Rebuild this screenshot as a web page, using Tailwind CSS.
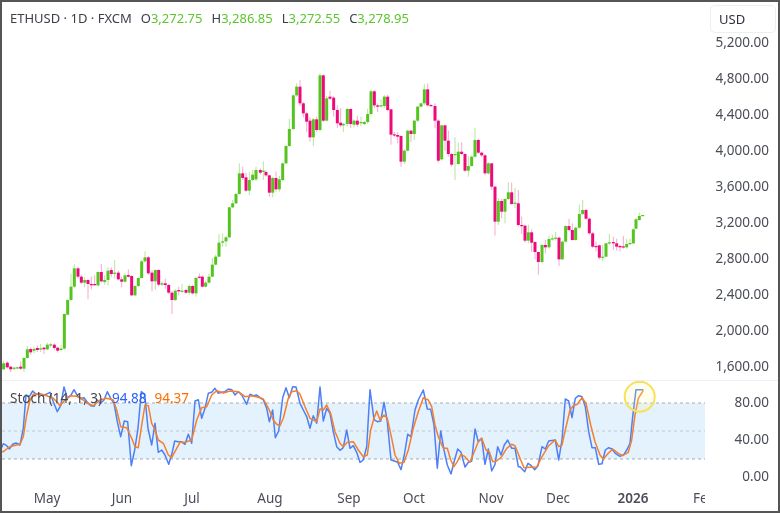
<!DOCTYPE html>
<html lang="en">
<head>
<meta charset="UTF-8">
<title>ETHUSD chart</title>
<script src="https://cdn.jsdelivr.net/npm/@tailwindcss/browser@4"></script>
</head>
<body class="bg-white">
<div class="relative w-[780px] h-[513px] overflow-hidden bg-white border-2 border-[#555555] blur-[0.35px] font-['Noto_Sans',sans-serif] text-[#3c3f4a] flex flex-col">

  <!-- price pane -->
  <div class="relative h-[378px] flex shrink-0">
    <div class="relative w-[703px]">
      <svg id="candles" width="703" height="378" class="block"></svg>
      <div class="absolute left-[8px] top-[7px] flex gap-[9px] text-[13px] leading-[18px]">
        <span>ETHUSD · 1D · FXCM</span>
        <div class="flex gap-[9px]">
          <span>O<span class="text-[#5cc62e]">3,272.75</span></span>
          <span>H<span class="text-[#5cc62e]">3,286.85</span></span>
          <span>L<span class="text-[#5cc62e]">3,272.55</span></span>
          <span>C<span class="text-[#5cc62e]">3,278.95</span></span>
        </div>
      </div>
    </div>
    <!-- price axis -->
    <div class="flex-1 relative pt-[22px] pr-[9px] text-right text-[13.5px] text-[#4a4d57]">
      <div class="h-[36px] leading-[36px]">5,200.00</div>
      <div class="h-[36px] leading-[36px]">4,800.00</div>
      <div class="h-[36px] leading-[36px]">4,400.00</div>
      <div class="h-[36px] leading-[36px]">4,000.00</div>
      <div class="h-[36px] leading-[36px]">3,600.00</div>
      <div class="h-[36px] leading-[36px]">3,200.00</div>
      <div class="h-[36px] leading-[36px]">2,800.00</div>
      <div class="h-[36px] leading-[36px]">2,400.00</div>
      <div class="h-[36px] leading-[36px]">2,000.00</div>
      <div class="h-[36px] leading-[36px]">1,600.00</div>
      <div class="absolute left-[5px] top-[3px] w-[66px] h-[28px] bg-white border border-[#eeeeee] rounded-[5px] shadow-[0_4px_0_#ffffff] text-left text-[13px] pl-[8px] leading-[26px] text-[#2f323c]">USD</div>
    </div>
  </div>

  <div class="h-px bg-[#eeeef6] shrink-0"></div>

  <!-- stochastic pane -->
  <div class="relative h-[100px] flex shrink-0 overflow-hidden">
    <div class="relative w-[703px]">
      <svg id="stoch" width="703" height="100" class="block"></svg>
      <div class="absolute left-[8px] top-[8px] flex text-[13.5px] leading-[18px]">
        <span class="text-[#44474f]">Stoch (14, 1, 3)</span>
        <span class="text-[#2962ff] ml-[10px]">94.88</span>
        <span class="text-[#ff6d00] ml-[8px]">94.37</span>
      </div>
    </div>
    <div class="flex-1 pt-[3px] pr-[9px] text-right text-[13.5px] text-[#4a4d57]">
      <div class="h-[37px] leading-[37px]">80.00</div>
      <div class="h-[37px] leading-[37px]">40.00</div>
      <div class="h-[37px] leading-[37px]">0.00</div>
    </div>
  </div>

  <!-- time axis -->
  <div class="relative flex-1 text-[13.5px] text-[#4a4d57] leading-[18px]">
    <div class="absolute inset-y-0 left-0 w-[703px] overflow-hidden">
      <span class="absolute top-[8px] left-[45px] -translate-x-1/2">May</span>
      <span class="absolute top-[8px] left-[120px] -translate-x-1/2">Jun</span>
      <span class="absolute top-[8px] left-[190px] -translate-x-1/2">Jul</span>
      <span class="absolute top-[8px] left-[268px] -translate-x-1/2">Aug</span>
      <span class="absolute top-[8px] left-[347px] -translate-x-1/2">Sep</span>
      <span class="absolute top-[8px] left-[412px] -translate-x-1/2">Oct</span>
      <span class="absolute top-[8px] left-[489px] -translate-x-1/2">Nov</span>
      <span class="absolute top-[8px] left-[556px] -translate-x-1/2">Dec</span>
      <span class="absolute top-[8px] left-[631px] -translate-x-1/2 font-semibold">2026</span>
      <span class="absolute top-[8px] left-[691px]">Feb</span>
    </div>
  </div>
</div>

<script>
  // pane origin inside the frame
  const OX = 2, OY = 2, STOCH_Y = 381;
  const UP = '#55c41f', DOWN = '#ec0a78', UP_WICK = '#b5e6a0', DOWN_WICK = '#f9a8cf';

  // [x, bodyTop, bodyBottom, color, wickTop, wickBottom], read off the chart in 3x coords
  const a = [
    [2,580,598,'u',575,610],[11,580,598,'u',572,600],[22,578,592,'d',574,596],[32,590,598,'d',588,606],[42,593,596,'u',590,600],[52,592,595,'u',590,598],[62,590,596,'d',574,600],[72,564,596,'u',560,606],
    [82,538,564,'u',528,566],[92,537,547,'d',532,554],[102,537,542,'u',530,550],[112,534,540,'d',526,546],[122,535,538,'u',522,546],[132,533,538,'d',530,552],[142,524,538,'u',518,540],[152,523,526,'u',518,532],
    [163,524,534,'d',520,540],[173,533,542,'d',530,548],[183,536,540,'u',524,544],[193,432,536,'u',430,538],[203,390,434,'u',388,436],[213,350,390,'u',312,394],[223,295,350,'u',283,354],[234,295,320,'d',290,326],
    [244,320,338,'d',314,342],[254,330,338,'u',322,352],[264,330,342,'d',326,388],[274,342,344,'d',320,358],[284,342,344,'d',316,348],[294,306,346,'u',304,350],[304,306,334,'d',282,338],[314,330,336,'u',316,344],
    [324,302,330,'u',292,346],[334,300,312,'d',292,320],[344,308,310,'u',270,326],[355,308,328,'d',302,332],[365,328,335,'d',320,352],[375,316,335,'u',310,338],[385,315,320,'d',298,324],[395,318,376,'d',316,378],
    [405,348,376,'u',346,378],[415,324,348,'u',322,352],[425,274,324,'u',270,326],[435,262,274,'u',244,278],[445,262,310,'d',258,314],[456,308,334,'d',300,364],[466,300,334,'u',298,360],[476,300,344,'d',298,350],
    [486,340,344,'u',334,348],[496,340,345,'d',326,356],[506,345,368,'d',342,372],[516,368,390,'d',362,432],[526,362,390,'u',358,394],[536,360,364,'d',350,376],[546,362,364,'u',342,368],[558,360,368,'d',356,372],
    [568,348,368,'u',344,374],[578,348,370,'d',344,374],[588,324,370,'u',320,380],[598,320,322,'d',310,326],[607,320,350,'d',316,352],[617,338,350,'u',332,352],[627,320,338,'u',310,340],[637,284,320,'u',264,322],
    [647,260,284,'u',254,286],[657,218,260,'u',192,262],[668,214,218,'u',190,230],[678,202,214,'u',198,230],[688,112,202,'u',110,204],[698,100,112,'u',90,114],[708,72,100,'u',68,102],[718,10,72,'u',-20,74],
    [728,10,24,'d',-10,30],[738,22,62,'d',8,66],[748,30,62,'u',6,76],[758,14,30,'u',0,34],[768,0,28,'u',-10,34]
  ].map(c => [c[0]/3, 170+c[1]/3, 170+c[2]/3, c[3], 170+c[4]/3, 170+c[5]/3]);

  const b = [
    [1,510,518,'d',505,524],[10,512,513,'u',484,540],[18,516,526,'d',510,530],[28,526,578,'d',524,590],[38,534,578,'u',530,592],[48,534,568,'d',514,575],[58,538,568,'u',528,575],[68,490,540,'u',488,544],[78,438,490,'u',436,492],
    [88,387,438,'u',356,440],[100,286,387,'u',284,390],[110,260,286,'u',250,290],[120,260,310,'d',240,318],[130,310,340,'d',305,352],[140,340,365,'d',336,395],[150,362,412,'d',352,425],[160,358,412,'u',354,438],
    [170,358,390,'d',350,396],[180,226,390,'u',220,394],[190,226,362,'d',224,366],[200,295,362,'u',288,364],[210,290,296,'d',272,300],[221,293,330,'d',288,350],[232,330,370,'d',316,384],[242,368,376,'d',324,382],
    [250,372,376,'u',368,396],[262,327,372,'u',324,380],[272,327,372,'d',324,384],[282,362,374,'u',358,382],[292,362,374,'d',348,380],[303,366,369,'u',350,378],[313,366,372,'u',362,376],[323,342,366,'u',326,372],
    [333,274,342,'u',268,346],[343,274,316,'d',270,324],[353,316,320,'d',310,336],[363,316,319,'u',298,322],[373,290,318,'u',286,324],[383,290,330,'d',284,334],[393,328,404,'d',326,434],[403,403,405,'d',396,410],
    [413,405,410,'d',396,430],[423,408,485,'d',406,500],[433,452,485,'u',448,492],[443,392,452,'u',390,454],[453,392,402,'d',390,426],[463,362,402,'u',360,420],[473,320,362,'u',318,366],[483,310,320,'u',308,322],
    [493,268,310,'u',252,316],[503,268,316,'d',250,320],[513,315,317,'d',312,320],[525,318,362,'d',310,384],[535,362,482,'d',358,488],[545,376,478,'u',374,482],[555,376,422,'d',374,452],[565,422,462,'d',392,470],
    [575,462,494,'d',458,500],[585,462,464,'u',412,540],[595,455,492,'u',428,494],[605,455,462,'d',426,466],[615,462,512,'d',460,516],[625,498,512,'u',468,530],[635,470,498,'u',466,500],[645,420,470,'u',384,472],
    [655,420,458,'d',416,462],[665,458,466,'d',454,472],[675,466,520,'d',462,526],[685,490,520,'u',486,524]
  ].map(c => [260+c[0]/3, c[1]/3, c[2]/3, c[3], c[4]/3, c[5]/3]);

  const d = [
    [65,-20,50,'d',-20,60],[75,50,155,'d',48,197],[85,93,155,'u',84,165],[95,93,125,'d',86,145],[105,87,125,'u',85,160],[115,67,87,'u',36,90],
    [125,67,102,'d',38,104],[135,98,101,'u',54,114],[145,100,165,'d',60,170],[155,165,167,'d',140,192],[165,167,212,'d',165,218],[175,187,212,'u',164,220],[185,187,218,'d',178,246],[195,216,246,'d',214,268],
    [205,246,276,'d',244,314],[216,225,276,'u',222,280],[226,225,232,'d',210,250],[237,207,232,'u',197,236],[247,205,207,'u',194,212],[257,203,206,'u',186,212],[267,203,268,'d',200,288],[277,215,268,'u',212,270],
    [287,168,215,'u',166,218],[297,168,180,'d',146,184],[307,180,210,'d',160,212],[317,173,210,'u',170,212],[328,132,173,'u',104,176],[338,120,132,'u',90,135],[348,120,146,'d',116,150],[358,146,190,'d',142,194],
    [368,190,230,'d',186,234],[378,228,231,'d',214,244],[388,226,263,'d',224,268],[398,260,263,'u',224,274],[408,220,260,'u',218,262],[418,217,220,'u',192,224],[430,216,220,'d',200,240],[440,220,230,'d',206,242],
    [450,228,232,'d',224,244],[460,229,232,'d',198,236],[470,222,232,'u',206,236],[480,219,222,'u',206,224],[490,178,220,'u',174,222],[498,148,176,'u',144,178],[508,138,150,'u',128,152],[518,135,137,'u',135,138]
  ].map(c => [470+c[0]/3, 170+c[1]/3, 170+c[2]/3, c[3], 170+c[4]/3, 170+c[5]/3]);

  let html = '';
  [...a, ...b, ...d].forEach(c => {
    const x = c[0] - OX, up = c[3] == 'u';
    html += `<rect x="${x - .5}" y="${c[4] - OY}" width="1" height="${c[5] - c[4]}" fill="${up ? UP_WICK : DOWN_WICK}"/>`;
    html += `<rect x="${x - 1.5}" y="${c[1] - OY}" width="3" height="${Math.max(c[2] - c[1], 1.2)}" fill="${up ? UP : DOWN}"/>`;
  });
  document.getElementById('candles').innerHTML = html;

  // stochastic lines, three 3x crops each starting at y=375
  const blue = [
    [0,[[0,230],[10,206],[20,212],[28,222],[38,208],[48,204],[60,210],[70,160],[78,60],[88,65],[98,48],[108,58],[118,56],[128,62],[138,58],[150,52],[160,80],[172,110],[182,92],[192,36],[202,70],[212,62],[222,44],[232,62],[242,70],[252,68],[262,82],[272,92],[282,94],[292,75],[302,85],[312,75],[322,50],[332,70],[342,85],[352,140],[362,185],[373,138],[383,140],[394,272],[404,225],[414,160],[424,50],[434,58],[444,160],[455,210],[465,145],[475,232],[485,225],[495,240],[506,268],[516,235],[524,198],[534,200],[544,200],[555,208],[565,178],[575,205],[585,78],[595,74],[605,130],[615,100],[625,55],[635,52],[645,40],[655,55],[665,52],[675,50],[685,42],[695,44],[705,60],[715,50],[725,60],[740,88],[750,58],[760,62],[770,60]]],
    [260,[[0,68],[10,75],[20,100],[28,140],[38,105],[46,188],[56,168],[68,68],[78,38],[88,68],[98,35],[108,36],[120,85],[130,105],[140,125],[150,160],[160,122],[170,145],[180,36],[190,138],[200,100],[210,115],[220,170],[230,215],[240,226],[250,218],[260,165],[270,220],[280,212],[290,232],[300,262],[310,255],[320,215],[330,44],[342,134],[352,140],[362,138],[372,82],[382,140],[393,255],[403,258],[413,262],[423,284],[433,240],[443,178],[453,185],[465,105],[475,75],[490,45],[502,102],[512,103],[522,150],[532,280],[542,168],[552,225],[562,270],[573,297],[583,258],[593,222],[603,232],[615,276],[625,262],[635,258],[645,162],[655,200],[665,190],[675,268],[685,222],[695,288],[705,268],[713,215],[723,240],[733,210],[743,195],[755,220],[765,220],[775,275]]],
    [520,[[0,275],[14,290],[24,265],[34,272],[44,284],[54,272],[66,215],[76,222],[86,198],[106,195],[116,255],[126,195],[136,72],[146,78],[156,128],[166,70],[176,62],[186,65],[196,95],[206,170],[216,218],[226,218],[236,268],[246,266],[256,225],[266,218],[276,222],[286,235],[300,244],[312,238],[322,222],[330,205],[338,125],[348,44],[358,44],[370,44]]]
  ];
  const orange = [
    [0,[[0,228],[10,230],[20,222],[30,215],[40,212],[60,208],[70,185],[80,120],[90,75],[100,58],[120,56],[140,62],[160,70],[170,80],[180,92],[190,80],[210,62],[230,64],[250,75],[262,85],[280,92],[300,75],[320,70],[340,75],[350,105],[362,155],[380,158],[395,190],[405,215],[415,218],[425,150],[435,90],[445,92],[455,145],[465,165],[475,195],[490,205],[505,240],[515,248],[530,220],[540,202],[555,202],[575,195],[590,135],[605,98],[620,95],[635,60],[650,47],[670,54],[690,48],[715,50],[735,65],[755,62]]],
    [260,[[0,68],[10,72],[20,90],[30,110],[40,135],[50,148],[60,152],[70,130],[85,70],[95,50],[110,47],[120,58],[135,95],[150,130],[170,140],[180,102],[190,105],[200,90],[212,115],[225,170],[240,205],[250,215],[262,202],[280,200],[295,225],[310,245],[322,240],[332,165],[342,130],[350,108],[360,135],[372,120],[382,130],[395,190],[405,240],[418,265],[432,262],[445,225],[460,160],[475,110],[490,68],[505,75],[515,95],[525,150],[535,185],[550,220],[562,220],[572,255],[582,275],[592,260],[603,238],[615,245],[630,262],[645,225],[655,200],[665,190],[678,225],[688,230],[698,260],[710,258],[725,245],[740,220],[755,208],[765,212]]],
    [520,[[0,250],[12,278],[30,277],[50,276],[66,245],[86,212],[106,195],[116,215],[126,210],[136,165],[150,105],[160,92],[172,88],[186,68],[198,85],[212,150],[225,200],[240,240],[250,252],[265,235],[278,222],[295,235],[308,242],[325,232],[335,195],[345,120],[355,70],[370,46]]]
  ];
  const toPoints = crops => crops.flatMap(([off, pts]) =>
    pts.map(p => `${(off + p[0]/3 - OX).toFixed(1)},${(375 + p[1]/3 - STOCH_Y).toFixed(1)}`)).join(' ');

  const Y80 = 403 - STOCH_Y, Y60 = 431 - STOCH_Y, Y20 = 459 - STOCH_Y;
  let s = `<rect x="0" y="${Y80}" width="703" height="${Y20 - Y80}" fill="#e3f2fd"/>`;
  s += `<line x1="0" x2="703" y1="${Y80}" y2="${Y80}" stroke="#a9abb0" stroke-dasharray="3 3"/>`;
  s += `<line x1="0" x2="703" y1="${Y60}" y2="${Y60}" stroke="#c4c6ca" stroke-dasharray="3 3"/>`;
  s += `<line x1="0" x2="703" y1="${Y20}" y2="${Y20}" stroke="#a9abb0" stroke-dasharray="3 3"/>`;
  s += `<polyline points="${toPoints(blue)}" fill="none" stroke="#4f7ff5" stroke-width="1.5" stroke-linejoin="round"/>`;
  s += `<polyline points="${toPoints(orange)}" fill="none" stroke="#f57f2a" stroke-width="1.5" stroke-linejoin="round"/>`;
  s += `<circle cx="${639.7 - OX}" cy="${396.7 - STOCH_Y}" r="15" fill="#fdf3a0" fill-opacity=".2" stroke="#f6e25a" stroke-width="2"/>`;
  document.getElementById('stoch').innerHTML = s;
</script>
</body>
</html>
